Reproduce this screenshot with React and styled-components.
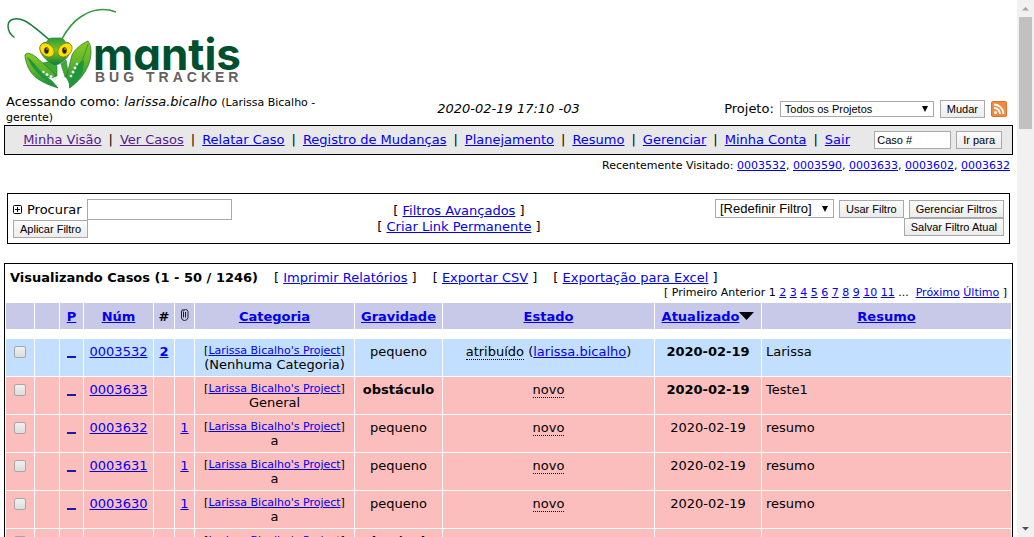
import React from "react";
import styled, { createGlobalStyle, css } from "styled-components";

const ui = `"DejaVu Sans", Verdana, sans-serif`;
const control = `"Liberation Sans", Arial, sans-serif`;

const GlobalStyle = createGlobalStyle`
  *, *::before, *::after { box-sizing: border-box; }
  body { margin: 0; background: #fff; color: #000; font: 13px/16px ${ui}; }
`;

const Shell = styled.div`
  display: grid;
  grid-template-columns: minmax(0, 1fr) 17px;
  height: 100vh;
`;

const Content = styled.div`
  overflow-y: auto;
  scrollbar-width: none;
  padding: 8px 4px;
`;

const ScrollTrack = styled.div`
  display: flex;
  flex-direction: column;
  justify-content: space-between;
  align-items: center;
  background: #f1f1f1;
`;

const ScrollStart = styled.div`
  display: flex;
  flex-direction: column;
  align-items: center;
`;

const ScrollThumb = styled.div`
  width: 13px;
  height: 112px;
  background: #c1c1c1;
`;

const Link = styled.a`
  color: ${(p) => (p.$visited ? "#551a8b" : "#0000ee")};
  text-decoration: underline;
`;

const Small = styled.span`
  font-size: 11px;
`;

const Logo = styled.svg`
  display: block;
  margin-left: 2px;
`;

const LogoName = styled.text`
  font: 700 44px Inter, sans-serif;
  font-feature-settings: "cv11";
  fill: #00502f;
`;

const LogoTagline = styled.text`
  font: bold 14px ${control};
  letter-spacing: 4px;
  fill: #66605f;
`;

const LoginBar = styled.div`
  display: grid;
  grid-template-columns: 33fr 34fr 33fr;
  align-items: center;
  height: 33px;
  padding: 0 2px;
  line-height: 14px;
`;

const LoginUser = styled.div`
  align-self: end;
`;

const Clock = styled.time`
  text-align: center;
  font-style: italic;
`;

const ProjectForm = styled.form`
  display: flex;
  align-items: center;
  justify-content: flex-end;
  gap: 6px;
  padding-right: 4px;
`;

const Button = styled.button`
  height: 18px;
  padding: 0 6px;
  border: 1px solid #a9a9a9;
  border-radius: 0;
  background: linear-gradient(#fbfbfb, #ececec);
  color: #000;
  font: 11px/14px ${control};
  white-space: nowrap;
`;

const TextInput = styled.input`
  width: ${(p) => p.$width};
  height: ${(p) => p.$height};
  padding: 1px 2px;
  border: 1px solid #a9a9a9;
  border-radius: 0;
  background: #fff;
  color: #000;
  font: 11px ${control};
`;

const SelectWrap = styled.span`
  display: inline-grid;
  align-items: center;
  width: ${(p) => p.$width};
`;

const Select = styled.select`
  grid-area: 1 / 1;
  width: 100%;
  height: ${(p) => p.$height};
  padding: 0 18px 0 4px;
  appearance: none;
  border: 1px solid #a9a9a9;
  border-radius: 0;
  background: #fff;
  color: #000;
  font: ${(p) => p.$size} ${control};
`;

const SelectArrow = styled.svg`
  grid-area: 1 / 1;
  justify-self: end;
  margin-right: 5px;
  pointer-events: none;
`;

const MenuBar = styled.div`
  display: flex;
  align-items: center;
  height: 30px;
  border: 1px solid #000;
  background: #e8e8e8;
`;

const Menu = styled.nav`
  flex: 1;
  display: flex;
  justify-content: center;
  gap: 7px;
  padding-right: 6px;
  white-space: nowrap;
`;

const JumpForm = styled.form`
  display: flex;
  gap: 5px;
  padding-right: 10px;
`;

const Recent = styled.div`
  padding: 3px 3px 0 0;
  font-size: 11px;
  text-align: right;
`;

const FilterBox = styled.section`
  display: grid;
  grid-template-columns: 3fr 3fr 4fr;
  min-height: 51px;
  margin: 19px 3px;
  padding: 5px;
  border: 1px solid #000;
`;

const FilterSearch = styled.form`
  display: flex;
  flex-direction: column;
  align-items: flex-start;
`;

const SearchLine = styled.label`
  display: flex;
  align-items: center;
  gap: 5px;
`;

const FilterLinks = styled.div`
  padding-top: 4px;
  text-align: center;
`;

const FilterActions = styled.form`
  display: flex;
  flex-wrap: wrap;
  align-content: flex-start;
  justify-content: flex-end;
  align-items: center;
  column-gap: 5px;
  padding-left: 40px;
`;

const Issues = styled.table`
  width: 100%;
  table-layout: fixed;
  border: 1px solid #000;
  border-spacing: 1px;
`;

const Col = styled.col`
  width: ${(p) => p.$width};
`;

const TitleCell = styled.td`
  height: 37px;
  padding: 5px 4px 0;
  vertical-align: top;
`;

const TitleLine = styled.div`
  display: flex;
  gap: 16px;
  line-height: 16px;
`;

const TitleLead = styled.div`
  display: flex;
  gap: 16px;
`;

const Pager = styled.div`
  font-size: 11px;
  line-height: 14px;
  text-align: right;
`;

const HeadCell = styled.th`
  height: 26px;
  padding: 2px 0 0;
  background: #c8c8e8;
  font-weight: bold;
  vertical-align: middle;
`;

const SpacerCell = styled.td`
  height: 8px;
  padding: 0;
`;

const tones = { assigned: "#c2dfff", fresh: "#fcbdbd" };

const Row = styled.tr`
  background: ${(p) => tones[p.$tone]};
`;

const Cell = styled.td`
  height: 37px;
  padding: 4px;
  text-align: ${(p) => (p.$left ? "left" : "center")};
  font-weight: ${(p) => (p.$bold ? "bold" : "normal")};
  vertical-align: top;
  white-space: nowrap;
  line-height: 18px;
  ${(p) =>
    p.$stacked &&
    css`
      padding: 4px 0;
      line-height: 14px;
    `}
`;

const Status = styled.span`
  border-bottom: 1px dotted #000;
`;

const Check = styled.input`
  display: block;
  appearance: none;
  width: 12px;
  height: 12px;
  margin: 3px 4px 0;
  border: 1px solid #a6a6a6;
  border-radius: 2px;
  background: linear-gradient(#f0f0f0, #dcdcdc);
`;

const Priority = styled.a`
  display: block;
  width: 9px;
  height: 15px;
  margin: 0 auto;
  border-bottom: 2px solid #1a1aaa;
`;

function MantisLogo() {
  return (
    <Logo width="240" height="84" viewBox="6 8 240 84" role="img" aria-label="Mantis Bug Tracker">
      <defs>
        <linearGradient id="leaf" x1="0" y1="0" x2="0" y2="1">
          <stop offset="0" stopColor="#8cc820" />
          <stop offset="0.5" stopColor="#5cb42c" />
          <stop offset="1" stopColor="#128a3a" />
        </linearGradient>
        <linearGradient id="face" x1="0" y1="0" x2="0" y2="1">
          <stop offset="0" stopColor="#2b9a37" />
          <stop offset="0.45" stopColor="#7cc32a" />
          <stop offset="1" stopColor="#0f7f38" />
        </linearGradient>
      </defs>
      <path d="M50.500 40.500C42 34 32 24 24 20.500C16 17 8 19 8 26C8 31 11 35 14.500 37.500" fill="none" stroke="#15803c" strokeWidth="1.500" />
      <path d="M61 40.500C66 31 72 22 82 16C93 9 105 8 116 12" fill="none" stroke="#2f9a39" strokeWidth="1.500" />
      <path d="M52 61L57 66V76L51 77L38 64Z" fill="#43a832" stroke="#117637" strokeWidth="0.600" />
      <path d="M61 64L66 60L68 72L78 58L72 77L65 77Z" fill="#43a832" stroke="#117637" strokeWidth="0.600" />
      <path d="M25 55C26 52 31 53 36 57L56 75L54 78L42 76L58 88C42 83 32 77 28 67C26 62 25 59 25 55Z" fill="url(#leaf)" stroke="#117637" strokeWidth="0.700" />
      <path d="M27 57C32 69 42 79 58 88C54 80 44 76 38 68C34 63 31 59 27 57Z" fill="#1f963a" />
      <path d="M88 41C92 46 92 57 88 66C84 75 78 82 69.500 88C70 83 68 80 66 77C69 69 70 61 72 55C75 49 81 44 88 41Z" fill="url(#leaf)" stroke="#117637" strokeWidth="0.700" />
      <path d="M84 60C76 64 69 73 69.500 88C79 80 84 74 84 60Z" fill="#1f963a" />
      <path d="M88 44C84 58 79 68 72 80" fill="none" stroke="#258f33" strokeWidth="0.800" />
      <g fill="#fff" stroke="#9ab8a0" strokeWidth="0.300">
        <circle cx="43.500" cy="72" r="1.300" />
        <circle cx="47" cy="74.500" r="1.500" />
        <circle cx="51" cy="76.500" r="1.500" />
        <circle cx="54.500" cy="78.500" r="1.300" />
        <circle cx="77" cy="64" r="1.200" />
        <circle cx="75" cy="68" r="1.400" />
        <circle cx="73" cy="72" r="1.500" />
        <circle cx="71" cy="76" r="1.300" />
      </g>
      <path d="M47 42C48 37 53 38 56 38C59 38 64 37 65 42C71 42 73 47 70 53C67 59 61 64 56 65C51 64 44 59 41 53C38 47 41 42 47 42Z" fill="url(#face)" stroke="#177f38" strokeWidth="0.600" />
      <ellipse cx="47" cy="50" rx="8" ry="6" transform="rotate(42 47 50)" fill="#ffe000" stroke="#8a7a00" strokeWidth="0.700" />
      <ellipse cx="65" cy="50" rx="8" ry="6" transform="rotate(-42 65 50)" fill="#ffe000" stroke="#8a7a00" strokeWidth="0.700" />
      <ellipse cx="46.500" cy="50.500" rx="2.200" ry="3.300" fill="#2a2210" />
      <ellipse cx="64.500" cy="50.500" rx="2.200" ry="3.300" fill="#2a2210" />
      <circle cx="47" cy="49" r="0.700" fill="#fff" />
      <circle cx="65" cy="49" r="0.700" fill="#fff" />
      <LogoName x="93" y="70">mantis</LogoName>
      <LogoTagline x="95" y="82">BUG TRACKER</LogoTagline>
    </Logo>
  );
}

function RssIcon() {
  return (
    <svg width="16" height="16" viewBox="0 0 16 16" role="img" aria-label="RSS">
      <rect width="16" height="16" rx="2" fill="#e0702c" />
      <rect x="1" y="1" width="14" height="14" rx="1" fill="#f08a3c" />
      <circle cx="4.500" cy="11.500" r="1.500" fill="#fff" />
      <path d="M3 7a6 6 0 0 1 6 6M3 3.500A9.500 9.500 0 0 1 12.500 13" fill="none" stroke="#fff" strokeWidth="1.800" />
    </svg>
  );
}

function PaperClip() {
  return (
    <svg width="8" height="12" viewBox="0 0 8 12" role="img" aria-label="Anexos">
      <path d="M2.500 3v5.500M4.500 3v5.500M0.500 2.500v6.500Q1 11.500 3.500 11.500T7 9V2.500Q6.500 .5 4.500 .5T2.500 2.500M0.500 3Q0.500 .5 2.500 .5" fill="none" stroke="#222" />
    </svg>
  );
}

function Dropdown({ label, width, height, size, value }) {
  return (
    <SelectWrap $width={width}>
      <Select $height={height} $size={size} aria-label={label} defaultValue={value}>
        <option>{value}</option>
      </Select>
      <SelectArrow width="8" height="6" viewBox="0 0 8 6" aria-hidden="true">
        <path d="M1 0h6L4 6z" fill="#000" />
      </SelectArrow>
    </SelectWrap>
  );
}

const menu = ["Minha Visão", "Ver Casos", "Relatar Caso", "Registro de Mudanças", "Planejamento", "Resumo", "Gerenciar", "Minha Conta", "Sair"];
const recent = ["0003532", "0003590", "0003633", "0003602", "0003632"];
const pages = [2, 3, 4, 5, 6, 7, 8, 9, 10, 11];
const columns = ["28px", "24px", "23px", "69px", "20px", "19px", "159px", "87px", "211px", "106px", "auto"];

const issues = [
  { id: "0003532", tone: "assigned", notes: 2, category: "(Nenhuma Categoria)", severity: "pequeno", status: "atribuído", owner: "larissa.bicalho", recent: true, summary: "Larissa" },
  { id: "0003633", tone: "fresh", category: "General", severity: "obstáculo", major: true, status: "novo", recent: true, summary: "Teste1" },
  { id: "0003632", tone: "fresh", files: 1, category: "a", severity: "pequeno", status: "novo", summary: "resumo" },
  { id: "0003631", tone: "fresh", files: 1, category: "a", severity: "pequeno", status: "novo", summary: "resumo" },
  { id: "0003630", tone: "fresh", files: 1, category: "a", severity: "pequeno", status: "novo", summary: "resumo" },
  { id: "0003629", tone: "fresh", category: "a", severity: "obstáculo", major: true, status: "novo", summary: "resumo" },
];

function IssueRow({ issue }) {
  return (
    <Row $tone={issue.tone}>
      <Cell><Check type="checkbox" aria-label={`Selecionar ${issue.id}`} /></Cell>
      <Cell />
      <Cell><Priority href="#" aria-label="Prioridade normal" /></Cell>
      <Cell><Link href="#">{issue.id}</Link></Cell>
      <Cell $bold>{issue.notes && <Link href="#">{issue.notes}</Link>}</Cell>
      <Cell>{issue.files && <Link href="#">{issue.files}</Link>}</Cell>
      <Cell $stacked>
        <Small>[<Link href="#">Larissa Bicalho's Project</Link>]</Small>
        <br />
        {issue.category}
      </Cell>
      <Cell $bold={issue.major}>{issue.severity}</Cell>
      <Cell>
        <Status>{issue.status}</Status>
        {issue.owner && <> (<Link href="#">{issue.owner}</Link>)</>}
      </Cell>
      <Cell $bold={issue.recent}>2020-02-19</Cell>
      <Cell $left>{issue.summary}</Cell>
    </Row>
  );
}

export default function App() {
  return (
    <>
      <GlobalStyle />
      <Shell>
        <Content>
          <MantisLogo />
          <LoginBar>
            <LoginUser>
              Acessando como: <i>larissa.bicalho</i> <Small>(Larissa Bicalho - gerente)</Small>
            </LoginUser>
            <Clock>2020-02-19 17:10 -03</Clock>
            <ProjectForm>
              <span>Projeto:</span>
              <Dropdown label="Projeto" width="154px" height="16px" size="11px" value="Todos os Projetos" />
              <Button type="button">Mudar</Button>
              <RssIcon />
            </ProjectForm>
          </LoginBar>

          <MenuBar>
            <Menu>
              {menu.map((item, i) => (
                <React.Fragment key={item}>
                  {i > 0 && <span>|</span>}
                  <Link href="#" $visited={i < 2}>{item}</Link>
                </React.Fragment>
              ))}
            </Menu>
            <JumpForm>
              <TextInput $width="77px" $height="18px" aria-label="Caso" defaultValue="Caso #" />
              <Button type="button">Ir para</Button>
            </JumpForm>
          </MenuBar>

          <Recent>
            Recentemente Visitado:{" "}
            {recent.map((id, i) => (
              <React.Fragment key={id}>
                {i > 0 && ", "}
                <Link href="#">{id}</Link>
              </React.Fragment>
            ))}
          </Recent>

          <FilterBox>
            <FilterSearch>
              <SearchLine>
                <svg width="9" height="9" viewBox="0 0 9 9" aria-hidden="true">
                  <rect x="0.500" y="0.500" width="8" height="8" rx="1" fill="#fff" stroke="#000" />
                  <path d="M2 4.500h5M4.500 2v5" stroke="#000" />
                </svg>
                Procurar
                <TextInput $width="145px" $height="21px" />
              </SearchLine>
              <Button type="button">Aplicar Filtro</Button>
            </FilterSearch>
            <FilterLinks>
              [ <Link href="#">Filtros Avançados</Link> ]
              <br />[ <Link href="#">Criar Link Permanente</Link> ]
            </FilterLinks>
            <FilterActions>
              <Dropdown label="Filtro" width="119px" height="19px" size="13px" value="[Redefinir Filtro]" />
              <Button type="button">Usar Filtro</Button>
              <Button type="button">Gerenciar Filtros</Button>
              <Button type="button">Salvar Filtro Atual</Button>
            </FilterActions>
          </FilterBox>

          <Issues>
            <colgroup>
              {columns.map((width, i) => <Col key={i} $width={width} />)}
            </colgroup>
            <thead>
              <tr>
                <TitleCell colSpan={11}>
                  <TitleLine>
                    <b>Visualizando Casos (1 - 50 / 1246)</b>
                    <TitleLead>
                      <span>[ <Link href="#">Imprimir Relatórios</Link> ]</span>
                      <span>[ <Link href="#">Exportar CSV</Link> ]</span>
                      <span>[ <Link href="#">Exportação para Excel</Link> ]</span>
                    </TitleLead>
                  </TitleLine>
                  <Pager>
                    [ Primeiro Anterior 1{" "}
                    {pages.map((n) => <React.Fragment key={n}><Link href="#">{n}</Link> </React.Fragment>)}
                    ... &nbsp;<Link href="#">Próximo</Link> <Link href="#">Último</Link> ]
                  </Pager>
                </TitleCell>
              </tr>
              <tr>
                <HeadCell />
                <HeadCell />
                <HeadCell><Link href="#">P</Link></HeadCell>
                <HeadCell><Link href="#">Núm</Link></HeadCell>
                <HeadCell>#</HeadCell>
                <HeadCell><PaperClip /></HeadCell>
                <HeadCell><Link href="#">Categoria</Link></HeadCell>
                <HeadCell><Link href="#">Gravidade</Link></HeadCell>
                <HeadCell><Link href="#">Estado</Link></HeadCell>
                <HeadCell>
                  <Link href="#">Atualizado</Link>
                  <svg width="15" height="9" viewBox="0 0 15 9" aria-hidden="true"><path d="M0 0h15L7.500 8z" /></svg>
                </HeadCell>
                <HeadCell><Link href="#">Resumo</Link></HeadCell>
              </tr>
            </thead>
            <tbody>
              <tr><SpacerCell colSpan={11} /></tr>
              {issues.map((issue) => <IssueRow key={issue.id} issue={issue} />)}
            </tbody>
          </Issues>
        </Content>
        <ScrollTrack aria-hidden="true">
          <ScrollStart>
            <svg width="17" height="17" viewBox="0 0 17 17"><path d="M5 10.500h7L8.500 7z" fill="#a3a3a3" /></svg>
            <ScrollThumb />
          </ScrollStart>
          <svg width="17" height="17" viewBox="0 0 17 17"><path d="M5 7h7L8.500 10.500z" fill="#505050" /></svg>
        </ScrollTrack>
      </Shell>
    </>
  );
}
